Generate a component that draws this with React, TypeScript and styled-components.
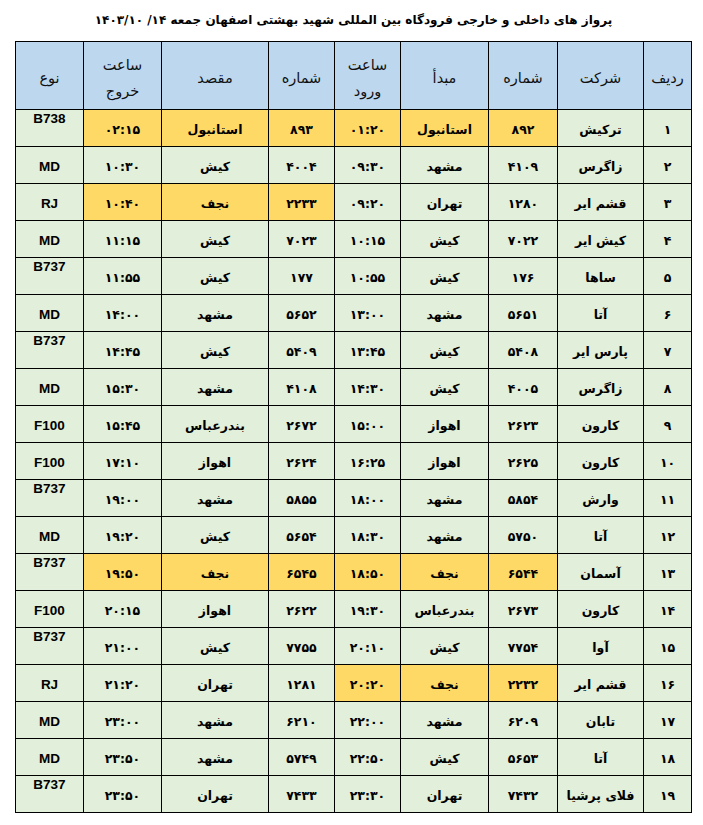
import React from 'react'
import styled, { createGlobalStyle } from 'styled-components'

type Tone = 'plain' | 'hot'

interface Flight {
  no: string
  airline: string
  inNo: string
  from: string
  arrive: string
  outNo: string
  to: string
  depart: string
  type: string
  // which columns (0-based, from the right) are highlighted
  hot?: number[]
}

const GlobalStyle = createGlobalStyle`
  html, body {
    margin: 0;
    padding: 0;
    background: #ffffff;
  }
  body {
    font-family: "DejaVu Sans", "Noto Sans", sans-serif;
    color: #000;
  }
`

const Page = styled.div`
  width: 703px;
  padding-left: 15px;
  box-sizing: border-box;
`

const Title = styled.h1`
  margin: 0;
  height: 41px;
  width: 677px;
  display: flex;
  align-items: center;
  justify-content: center;
  padding-bottom: 1px;
  box-sizing: border-box;
  direction: rtl;
  font-family: "DejaVu Sans", sans-serif;
  font-size: 12px;
  font-weight: bold;
  letter-spacing: -0.4px;
`

const DateText = styled.bdi`
  direction: ltr;
  unicode-bidi: isolate;
`

const Grid = styled.div`
  direction: rtl;
  display: grid;
  grid-template-columns: 47px 85px 68px 87px 65px 65px 106px 77px 67px;
  grid-template-rows: 67px;
  grid-auto-rows: 36px;
  gap: 1px;
  width: max-content;
  background: #000;
  border: 1px solid #000;
`

const HeadCell = styled.div`
  background: #bdd7ee;
  display: flex;
  align-items: center;
  justify-content: center;
  text-align: center;
  padding-top: 4px;
  box-sizing: border-box;
  font-family: "DejaVu Sans", sans-serif;
  font-size: 14.5px;
  line-height: 26px;
  color: #111;
`

const Cell = styled.div<{ $tone: Tone; $top?: boolean }>`
  background: ${p => (p.$tone === 'hot' ? '#ffd966' : '#e2efda')};
  display: flex;
  align-items: ${p => (p.$top ? 'flex-start' : 'center')};
  justify-content: center;
  padding-top: ${p => (p.$top ? '1px' : '3px')};
  box-sizing: border-box;
  font-family: "DejaVu Sans", sans-serif;
  font-size: 12.5px;
  font-weight: bold;
  white-space: nowrap;
`

const TypeText = styled.span`
  font-family: "Liberation Sans", Arial, sans-serif;
  font-size: 13.5px;
  font-weight: bold;
  direction: ltr;
`

const heads: React.ReactNode[] = [
  'ردیف',
  'شرکت',
  'شماره',
  'مبدأ',
  <>ساعت<br />ورود</>,
  'شماره',
  'مقصد',
  <>ساعت<br />خروج</>,
  'نوع',
]

const flights: Flight[] = [
  { no: '۱', airline: 'ترکیش', inNo: '۸۹۲', from: 'استانبول', arrive: '۰۱:۲۰', outNo: '۸۹۳', to: 'استانبول', depart: '۰۲:۱۵', type: 'B738', hot: [2, 3, 4, 5, 6, 7] },
  { no: '۲', airline: 'زاگرس', inNo: '۴۱۰۹', from: 'مشهد', arrive: '۰۹:۳۰', outNo: '۴۰۰۴', to: 'کیش', depart: '۱۰:۳۰', type: 'MD' },
  { no: '۳', airline: 'قشم ایر', inNo: '۱۲۸۰', from: 'تهران', arrive: '۰۹:۲۰', outNo: '۲۲۳۳', to: 'نجف', depart: '۱۰:۴۰', type: 'RJ', hot: [5, 6, 7] },
  { no: '۴', airline: 'کیش ایر', inNo: '۷۰۲۲', from: 'کیش', arrive: '۱۰:۱۵', outNo: '۷۰۲۳', to: 'کیش', depart: '۱۱:۱۵', type: 'MD' },
  { no: '۵', airline: 'ساها', inNo: '۱۷۶', from: 'کیش', arrive: '۱۰:۵۵', outNo: '۱۷۷', to: 'کیش', depart: '۱۱:۵۵', type: 'B737' },
  { no: '۶', airline: 'آتا', inNo: '۵۶۵۱', from: 'مشهد', arrive: '۱۳:۰۰', outNo: '۵۶۵۲', to: 'مشهد', depart: '۱۴:۰۰', type: 'MD' },
  { no: '۷', airline: 'پارس ایر', inNo: '۵۴۰۸', from: 'کیش', arrive: '۱۳:۴۵', outNo: '۵۴۰۹', to: 'کیش', depart: '۱۴:۴۵', type: 'B737' },
  { no: '۸', airline: 'زاگرس', inNo: '۴۰۰۵', from: 'کیش', arrive: '۱۴:۳۰', outNo: '۴۱۰۸', to: 'مشهد', depart: '۱۵:۳۰', type: 'MD' },
  { no: '۹', airline: 'کارون', inNo: '۲۶۲۳', from: 'اهواز', arrive: '۱۵:۰۰', outNo: '۲۶۷۲', to: 'بندرعباس', depart: '۱۵:۴۵', type: 'F100' },
  { no: '۱۰', airline: 'کارون', inNo: '۲۶۲۵', from: 'اهواز', arrive: '۱۶:۲۵', outNo: '۲۶۲۴', to: 'اهواز', depart: '۱۷:۱۰', type: 'F100' },
  { no: '۱۱', airline: 'وارش', inNo: '۵۸۵۴', from: 'مشهد', arrive: '۱۸:۰۰', outNo: '۵۸۵۵', to: 'مشهد', depart: '۱۹:۰۰', type: 'B737' },
  { no: '۱۲', airline: 'آتا', inNo: '۵۷۵۰', from: 'مشهد', arrive: '۱۸:۳۰', outNo: '۵۶۵۴', to: 'کیش', depart: '۱۹:۲۰', type: 'MD' },
  { no: '۱۳', airline: 'آسمان', inNo: '۶۵۴۴', from: 'نجف', arrive: '۱۸:۵۰', outNo: '۶۵۴۵', to: 'نجف', depart: '۱۹:۵۰', type: 'B737', hot: [2, 3, 4, 5, 6, 7] },
  { no: '۱۴', airline: 'کارون', inNo: '۲۶۷۳', from: 'بندرعباس', arrive: '۱۹:۳۰', outNo: '۲۶۲۲', to: 'اهواز', depart: '۲۰:۱۵', type: 'F100' },
  { no: '۱۵', airline: 'آوا', inNo: '۷۷۵۴', from: 'کیش', arrive: '۲۰:۱۰', outNo: '۷۷۵۵', to: 'کیش', depart: '۲۱:۰۰', type: 'B737' },
  { no: '۱۶', airline: 'قشم ایر', inNo: '۲۲۳۲', from: 'نجف', arrive: '۲۰:۲۰', outNo: '۱۲۸۱', to: 'تهران', depart: '۲۱:۲۰', type: 'RJ', hot: [2, 3, 4] },
  { no: '۱۷', airline: 'تابان', inNo: '۶۲۰۹', from: 'مشهد', arrive: '۲۲:۰۰', outNo: '۶۲۱۰', to: 'مشهد', depart: '۲۳:۰۰', type: 'MD' },
  { no: '۱۸', airline: 'آتا', inNo: '۵۶۵۳', from: 'کیش', arrive: '۲۲:۵۰', outNo: '۵۷۴۹', to: 'مشهد', depart: '۲۳:۵۰', type: 'MD' },
  { no: '۱۹', airline: 'فلای پرشیا', inNo: '۷۴۳۲', from: 'تهران', arrive: '۲۳:۳۰', outNo: '۷۴۳۳', to: 'تهران', depart: '۲۳:۵۰', type: 'B737' },
]

const App: React.FC = () => {
  return (
    <Page>
      <GlobalStyle />
      <Title>
        پرواز های داخلی و خارجی فرودگاه بین المللی شهید بهشتی اصفهان جمعه&nbsp;
        <DateText>۱۴۰۳/۱۰ /۱۴</DateText>
      </Title>

      <Grid>
        {/* header */}
        {heads.map((h, i) => (
          <HeadCell key={'h' + i}>
            <span>{h}</span>
          </HeadCell>
        ))}

        {/* rows */}
        {flights.map(f => {
          const values = [f.no, f.airline, f.inNo, f.from, f.arrive, f.outNo, f.to, f.depart]
          const tone = (i: number): Tone => (f.hot && f.hot.includes(i) ? 'hot' : 'plain')
          return (
            <React.Fragment key={f.no}>
              {values.map((v, i) => (
                <Cell key={i} $tone={tone(i)}>
                  {v}
                </Cell>
              ))}
              {/* B7xx labels sit at the top of the cell, like the source sheet */}
              <Cell $tone='plain' $top={f.type.startsWith('B')}>
                <TypeText>{f.type}</TypeText>
              </Cell>
            </React.Fragment>
          )
        })}
      </Grid>
    </Page>
  )
}

export default App
